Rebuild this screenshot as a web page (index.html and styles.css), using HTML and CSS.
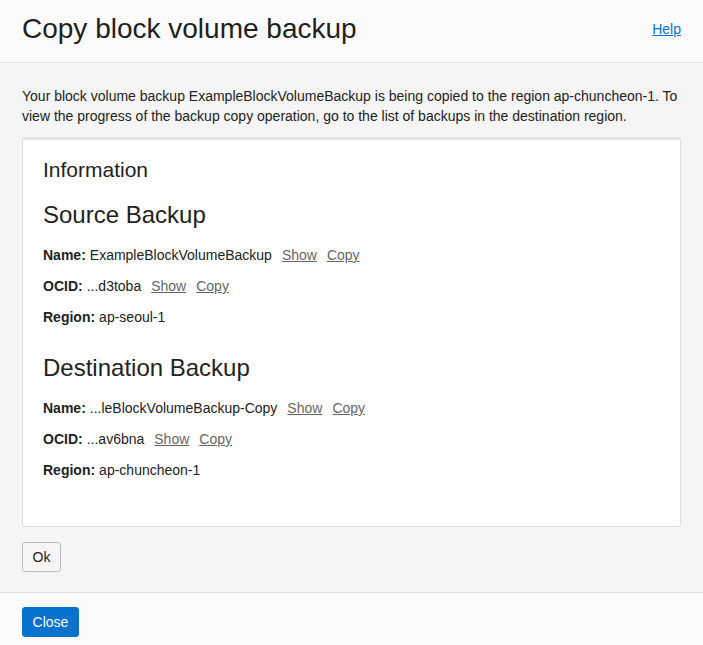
FILE: index.html
```html
<!DOCTYPE html>
<html lang="en">
<head>
<meta charset="utf-8">
<title>Copy block volume backup</title>
<link rel="stylesheet" href="styles.css">
</head>
<body>
<div class="dialog">
  <header class="dlg-header">
    <h1 class="dlg-title">Copy block volume backup</h1>
    <a class="help-link" href="#">Help</a>
  </header>
  <main class="dlg-body">
    <p class="intro">Your block volume backup ExampleBlockVolumeBackup is being copied to the region ap-chuncheon-1. To view the progress of the backup copy operation, go to the list of backups in the destination region.</p>
    <section class="card">
      <h2 class="card-title">Information</h2>
      <h3 class="group-title">Source Backup</h3>
      <div class="row"><span class="label">Name:</span> <span class="val">ExampleBlockVolumeBackup</span><a class="act" href="#">Show</a><a class="act" href="#">Copy</a></div>
      <div class="row"><span class="label">OCID:</span> <span class="val">...d3toba</span><a class="act" href="#">Show</a><a class="act" href="#">Copy</a></div>
      <div class="row"><span class="label">Region:</span> <span class="val">ap-seoul-1</span></div>
      <h3 class="group-title group-2">Destination Backup</h3>
      <div class="row"><span class="label">Name:</span> <span class="val">...leBlockVolumeBackup-Copy</span><a class="act" href="#">Show</a><a class="act" href="#">Copy</a></div>
      <div class="row"><span class="label">OCID:</span> <span class="val">...av6bna</span><a class="act" href="#">Show</a><a class="act" href="#">Copy</a></div>
      <div class="row"><span class="label">Region:</span> <span class="val">ap-chuncheon-1</span></div>
    </section>
    <button class="btn btn-ok" type="button">Ok</button>
  </main>
  <footer class="dlg-footer">
    <button class="btn btn-primary" type="button">Close</button>
  </footer>
</div>
</body>
</html>
```

FILE: styles.css
```css
* { box-sizing: border-box; }
html, body { margin: 0; padding: 0; }
body {
  font-family: "Liberation Sans", Arial, sans-serif;
  color: #222;
  background: #f5f5f5;
  width: 703px;
  height: 645px;
  overflow: hidden;
}
.dialog {
  display: flex;
  flex-direction: column;
  height: 645px;
}
.dlg-header {
  display: flex;
  align-items: center;
  justify-content: space-between;
  height: 63px;
  padding: 0 22px 4px;
  background: #fbfbfb;
  border-bottom: 1px solid #e2e2e2;
}
.dlg-title {
  margin: 0;
  font-size: 28px;
  font-weight: normal;
  line-height: 34px;
  color: #1f1f1f;
}
.help-link {
  font-size: 14px;
  color: #0572ce;
  text-decoration: underline;
}
.dlg-body {
  flex: 1;
  padding: 23px 22px 0;
  background: #f5f5f5;
}
.intro {
  margin: 0 0 11px;
  font-size: 14px;
  line-height: 20px;
}
.card {
  background: #fff;
  border: 1px solid #dedede;
  border-top: 3px solid #e4e4e4;
  border-radius: 3px;
  padding: 17px 20px 46px;
}
.card-title {
  margin: 0;
  font-size: 21px;
  font-weight: normal;
  line-height: 25px;
}
.group-title {
  margin: 18px 0 16px;
  font-size: 24px;
  font-weight: normal;
  line-height: 29px;
}
.group-2 { margin-top: 26px; }
.row {
  font-size: 14px;
  line-height: 20px;
  margin-bottom: 11px;
  display: flex;
  align-items: baseline;
}
.row:last-of-type { margin-bottom: 0; }
.label { font-weight: bold; margin-right: 4px; }
.act {
  color: #666;
  text-decoration: underline;
  margin-left: 10px;
}
.btn {
  font-family: "Liberation Sans", Arial, sans-serif;
  font-size: 14px;
  height: 30px;
  border-radius: 3px;
  cursor: pointer;
}
.btn-ok {
  margin-top: 15px;
  width: 39px;
  padding: 0;
  background: #f5f5f5;
  border: 1px solid #b9bcc2;
  color: #222;
}
.dlg-footer {
  height: 53px;
  padding: 14px 22px 0;
  background: #fbfbfb;
  border-top: 1px solid #e2e2e2;
}
.btn-primary {
  width: 57px;
  padding: 0;
  background: #0572ce;
  border: 1px solid #0572ce;
  color: #fff;
}
```
